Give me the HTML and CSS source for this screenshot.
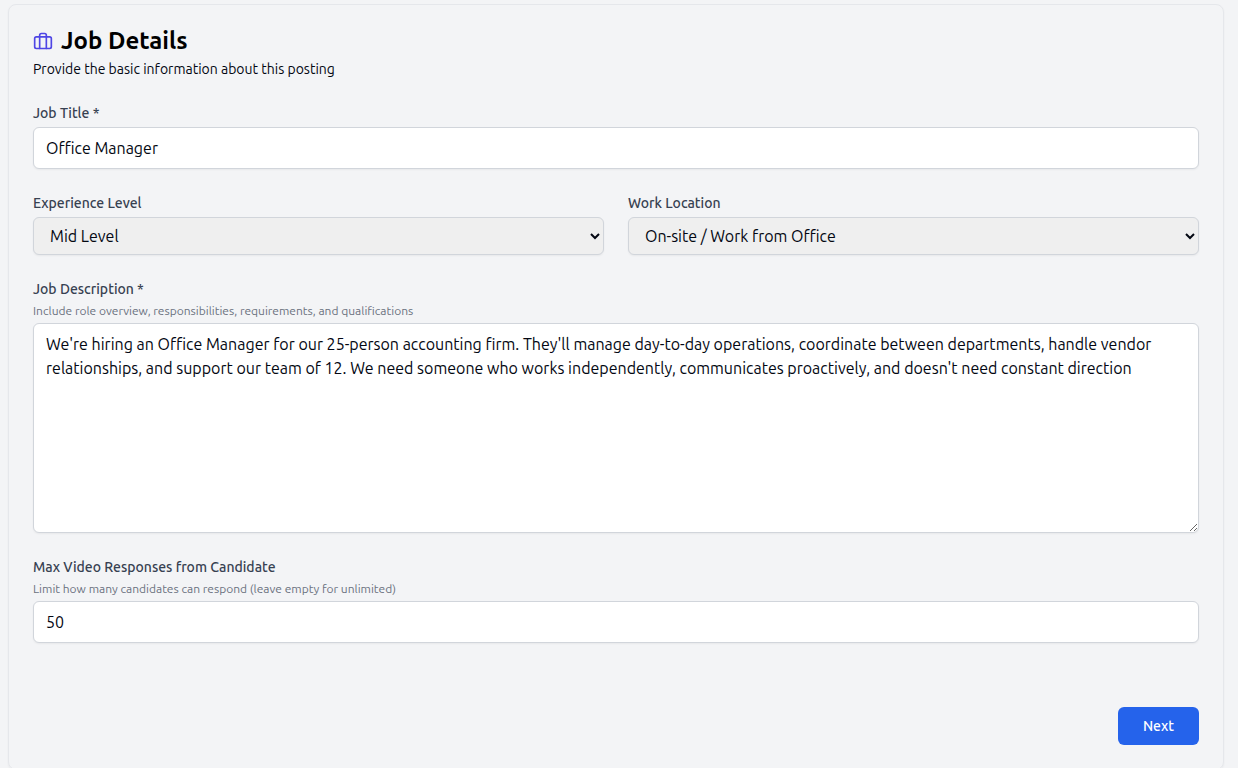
FILE: index.html
```html
<!DOCTYPE html>
<html lang="en">
<head>
  <meta charset="utf-8">
  <meta name="viewport" content="width=device-width, initial-scale=1">
  <title>Job Details</title>
  <link rel="stylesheet" href="styles.css">
</head>
<body class="page">
  <main class="card">
    <header class="card-header">
      <h1 class="card-title">
        <svg class="title-icon" viewBox="0 0 24 24" fill="none" stroke="currentColor" stroke-width="2" stroke-linecap="round" stroke-linejoin="round" aria-hidden="true">
          <rect x="2" y="7" width="20" height="14" rx="2"/>
          <path d="M16 21V5a2 2 0 0 0-2-2h-4a2 2 0 0 0-2 2v16"/>
        </svg>
        Job Details
      </h1>
      <p class="card-subtitle">Provide the basic information about this posting</p>
    </header>
    <form class="form">
      <div class="field">
        <label class="label" for="title">Job Title *</label>
        <input class="control" id="title" type="text" value="Office Manager">
      </div>
      <div class="row">
        <div class="field">
          <label class="label" for="level">Experience Level</label>
          <select class="control select" id="level">
            <option>Entry Level</option>
            <option selected>Mid Level</option>
            <option>Senior Level</option>
          </select>
        </div>
        <div class="field">
          <label class="label" for="location">Work Location</label>
          <select class="control select" id="location">
            <option selected>On-site / Work from Office</option>
            <option>Remote</option>
            <option>Hybrid</option>
          </select>
        </div>
      </div>
      <div class="field">
        <label class="label" for="description">Job Description *</label>
        <p class="hint" id="description-hint">Include role overview, responsibilities, requirements, and qualifications</p>
        <textarea class="control textarea" id="description" rows="8" spellcheck="false" aria-describedby="description-hint">We're hiring an Office Manager for our 25-person accounting firm. They'll manage day-to-day operations, coordinate between departments, handle vendor relationships, and support our team of 12. We need someone who works independently, communicates proactively, and doesn't need constant direction</textarea>
      </div>
      <div class="field">
        <label class="label" for="limit">Max Video Responses from Candidate</label>
        <p class="hint" id="limit-hint">Limit how many candidates can respond (leave empty for unlimited)</p>
        <input class="control" id="limit" type="number" value="50" aria-describedby="limit-hint">
      </div>
      <div class="actions">
        <button class="button" type="button">Next</button>
      </div>
    </form>
  </main>
</body>
</html>
```
FILE: styles.css
```css
* {
  box-sizing: border-box;
}

.page {
  margin: 0;
  padding: 4px 14px 0 8px;
  background: #f3f4f6;
  color: #030712;
  font-family: Ubuntu, "Noto Sans", sans-serif;
  font-size: 16px;
  line-height: 24px;
}

.card {
  padding: 24px;
  border: 1px solid #e5e7eb;
  border-radius: 8px;
  box-shadow: 0 1px 2px rgb(0 0 0 / 5%);
}

.card-header {
  display: flex;
  flex-direction: column;
  gap: 6px;
  margin-bottom: 24px;
}

.card-title {
  display: flex;
  align-items: center;
  gap: 8px;
  margin: 0;
  color: #000;
  font-size: 24px;
  font-weight: 600;
  line-height: 24px;
}

.title-icon {
  width: 20px;
  height: 20px;
  color: #4f46e5;
}

.card-subtitle {
  margin: 0;
  font-size: 14px;
  line-height: 20px;
}

.form {
  display: flex;
  flex-direction: column;
  gap: 24px;
}

.row {
  display: grid;
  grid-template-columns: 1fr 1fr;
  gap: 24px;
}

.field {
  display: flex;
  flex-direction: column;
  gap: 4px;
}

.label {
  color: #374151;
  font-size: 14px;
  font-weight: 500;
  line-height: 20px;
}

.hint {
  margin: 0;
  color: #6b7280;
  font-size: 12px;
  line-height: 16px;
}

.control {
  width: 100%;
  margin: 0;
  padding: 8px 12px;
  border: 1px solid #d1d5db;
  border-radius: 6px;
  background: #fff;
  box-shadow: 0 1px 2px rgb(0 0 0 / 5%);
  color: #030712;
  font: inherit;
}

.select {
  height: 38px;
  padding: 0 12px;
  background: #efefef;
}

.textarea {
  display: block;
  resize: vertical;
}

.actions {
  display: flex;
  justify-content: flex-end;
  padding-top: 40px;
}

.button {
  padding: 9px 25px;
  border: 0;
  border-radius: 6px;
  background: #2563eb;
  color: #fff;
  font: inherit;
  font-size: 14px;
  font-weight: 500;
  line-height: 20px;
}
```
